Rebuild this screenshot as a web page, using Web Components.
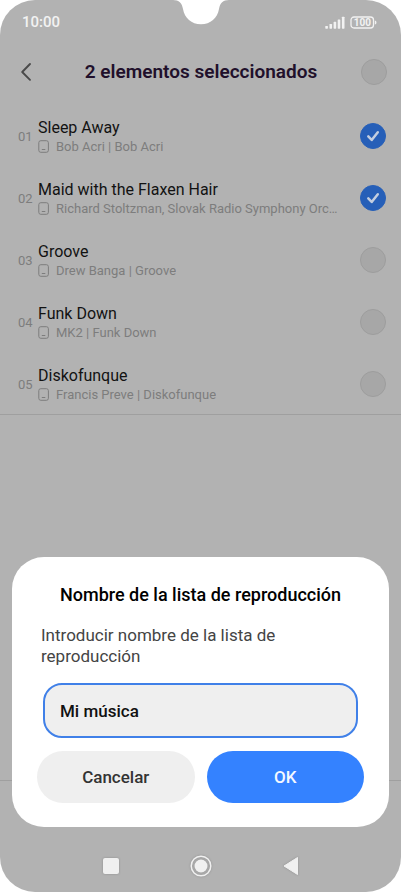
<!DOCTYPE html>
<html lang="es">
<head>
<meta charset="utf-8">
<meta name="viewport" content="width=device-width, initial-scale=1">
<title>Lista de reproducción</title>
<style>
  html { background: #fff; }
  body { margin: 0; font-family: Roboto, "Liberation Sans", sans-serif; color: #121212; }
</style>
</head>
<body>
<phone-screen>
  <status-bar slot="status" time="10:00" battery="100"></status-bar>
  <selection-header slot="header">2 elementos seleccionados</selection-header>
  <track-list>
    <track-row number="01" detail="Bob Acri | Bob Acri" checked>Sleep Away</track-row>
    <track-row number="02" detail="Richard Stoltzman, Slovak Radio Symphony Orc…" checked>Maid with the Flaxen Hair</track-row>
    <track-row number="03" detail="Drew Banga | Groove">Groove</track-row>
    <track-row number="04" detail="MK2 | Funk Down">Funk Down</track-row>
    <track-row number="05" detail="Francis Preve | Diskofunque">Diskofunque</track-row>
  </track-list>
  <navigation-bar slot="navigation"></navigation-bar>
  <name-dialog slot="dialog" value="Mi música">
    <span slot="title">Nombre de la lista de reproducción</span>
    <span slot="prompt">Introducir nombre de la lista de reproducción</span>
  </name-dialog>
</phone-screen>

<script>
class BaseElement extends HTMLElement {
  connectedCallback() {
    if (this.shadowRoot) return;
    const template = document.createElement('template');
    template.innerHTML = this.markup();
    this.attachShadow({ mode: 'open' }).append(template.content.cloneNode(true));
  }
  attr(name) { return this.getAttribute(name) || ''; }
}

customElements.define('phone-screen', class extends BaseElement {
  markup() { return `
    <style>
      :host { display: flex; flex-direction: column; position: relative; min-height: 100vh;
        background: #b2b2b2; border-radius: 35px; overflow: hidden; }
      .notch { position: absolute; top: 0; left: 50%; width: 56px; height: 25px; margin-left: -28px; }
      main { flex: 1; }
      .tools { height: 52px; border-top: 1px solid #9f9f9f; }
      .overlay { position: absolute; left: 12px; right: 12px; bottom: 65px; }
    </style>
    <slot name="status"></slot>
    <slot name="header"></slot>
    <main><slot></slot></main>
    <div class="tools"></div>
    <slot name="navigation"></slot>
    <svg class="notch" viewBox="0 0 56 25" aria-hidden="true"><path fill="#fff" d="M0 0C6 0 9 3 10 9C11.500 18 18.500 24.300 28 24.300C37.500 24.300 44.500 18 46 9C47 3 50 0 56 0Z"/></svg>
    <div class="overlay"><slot name="dialog"></slot></div>`; }
});

customElements.define('status-bar', class extends BaseElement {
  markup() { return `
    <style>
      :host { display: flex; align-items: center; justify-content: space-between; height: 44px;
        padding: 0 24px 0 22px; box-sizing: border-box; color: #f2f2f2; }
      time { font-size: 15px; line-height: 20px; font-weight: 500; }
      div { display: flex; align-items: center; gap: 5px; }
      svg { display: block; }
      text { font: 700 10px Roboto, "Liberation Sans", sans-serif; }
    </style>
    <time>${this.attr('time')}</time>
    <div>
      <svg width="20" height="13" viewBox="0 0 20 13" fill="#f2f2f2" aria-label="Cobertura">
        <rect x="0.300" y="10" width="2.600" height="2.700" rx=".6"/><rect x="4.500" y="8" width="2.600" height="4.700" rx=".6"/>
        <rect x="8.600" y="5.800" width="2.600" height="6.900" rx=".6"/><rect x="12.700" y="3.500" width="2.600" height="9.200" rx=".6"/>
        <rect x="16.900" y="0.700" width="2.600" height="12" rx=".6"/>
      </svg>
      <svg width="27" height="13" viewBox="0 0 27 13" aria-label="Batería">
        <rect x="1" y="1" width="22.500" height="11" rx="3" fill="none" stroke="#f2f2f2" stroke-width="1.300"/>
        <path d="M24.800 4.500C27 5 27 8 24.800 8.500Z" fill="#f2f2f2"/>
        <text x="12.300" y="10" text-anchor="middle" fill="#f2f2f2">${this.attr('battery')}</text>
      </svg>
    </div>`; }
});

customElements.define('round-check', class extends BaseElement {
  markup() { return `
    <style>
      :host { display: grid; width: 26px; height: 26px; flex: none; }
      input, svg { grid-area: 1 / 1; width: 26px; height: 26px; margin: 0; }
      input { appearance: none; box-sizing: border-box; border: 1px solid #9d9d9d; border-radius: 50%; background: #a7a7a7; }
      input:checked { border-color: #265fb8; background: #265fb8; }
      svg { display: none; pointer-events: none; }
      input:checked + svg { display: block; }
    </style>
    <input type="checkbox" aria-label="${this.attr('label')}" ${this.hasAttribute('checked') ? 'checked' : ''}>
    <svg viewBox="0 0 26 26" aria-hidden="true"><path d="M8.300 13.400L11.700 17L17.800 9.200" fill="none" stroke="#c3cee0" stroke-width="2.500" stroke-linecap="round" stroke-linejoin="round"/></svg>`; }
});

customElements.define('selection-header', class extends BaseElement {
  markup() { return `
    <style>
      :host { display: grid; grid-template-columns: 26px 1fr 26px; align-items: center; height: 56px; padding: 0 14px 0 13px; }
      button { display: grid; place-items: center; width: 26px; height: 26px; padding: 0; border: 0; background: none; }
      h1 { margin: 0; padding-left: 2px; text-align: center; font-size: 19px; line-height: 24px; font-weight: 600; color: #21102b; white-space: nowrap; }
    </style>
    <button type="button" aria-label="Atrás"><svg width="12" height="20" viewBox="0 0 12 20" aria-hidden="true"><path d="M10 2L2.200 10L10 17.800" fill="none" stroke="#4a4a4a" stroke-width="1.900" stroke-linecap="round" stroke-linejoin="round"/></svg></button>
    <h1><slot></slot></h1>
    <round-check label="Seleccionar todo"></round-check>`; }
});

customElements.define('track-list', class extends BaseElement {
  markup() { return `
    <style>:host { display: block; padding-top: 5px; box-shadow: inset 0 -1px #9f9f9f; }</style>
    <slot></slot>`; }
});

customElements.define('track-row', class extends BaseElement {
  markup() { return `
    <style>
      :host { display: grid; grid-template-columns: 20px minmax(0, 1fr) 26px; align-items: center;
        height: 62px; padding: 0 15px 0 18px; box-sizing: border-box; }
      .number { padding-top: 1px; font-size: 13px; line-height: 18px; color: #7d7d7d; }
      .text { min-width: 0; padding: 2px 18px 0 0; }
      h2 { margin: 0; font-size: 16px; line-height: 20px; font-weight: 400; }
      p { display: flex; align-items: center; gap: 7px; margin: 0; font-size: 13px; line-height: 18px; color: #7d7d7d; }
      p span { min-width: 0; overflow: hidden; text-overflow: ellipsis; white-space: nowrap; }
      svg { flex: none; }
    </style>
    <span class="number">${this.attr('number')}</span>
    <div class="text">
      <h2><slot></slot></h2>
      <p><svg width="11" height="14" viewBox="0 0 11 14" fill="none" stroke="#7d7d7d" aria-hidden="true"><rect x=".8" y=".7" width="9.600" height="11.600" rx="2"/><path d="M3.800 9.500H7.300"/></svg><span>${this.attr('detail')}</span></p>
    </div>
    <round-check label="${this.textContent}" ${this.hasAttribute('checked') ? 'checked' : ''}></round-check>`; }
});

customElements.define('navigation-bar', class extends BaseElement {
  markup() { return `
    <style>
      :host { display: flex; justify-content: center; gap: 66px; height: 59px; padding-top: 8px; box-sizing: border-box; }
      button { display: grid; place-items: center; width: 24px; height: 50px; padding: 0; border: 0; background: none; }
      svg { filter: drop-shadow(0 0 1px #8e8e8e); }
    </style>
    <button type="button" aria-label="Recientes"><svg width="24" height="24" viewBox="0 0 24 24" fill="#f0f0f0"><rect x="4" y="4" width="16" height="16" rx="2"/></svg></button>
    <button type="button" aria-label="Inicio"><svg width="24" height="24" viewBox="0 0 24 24"><circle cx="12" cy="12" r="9.800" fill="none" stroke="#f0f0f0" stroke-width="1.500"/><circle cx="12" cy="12" r="6.500" fill="#f0f0f0"/></svg></button>
    <button type="button" aria-label="Volver"><svg width="24" height="24" viewBox="0 0 24 24"><path d="M5 12L18.500 3.500V20.500Z" fill="#f0f0f0" stroke="#f0f0f0" stroke-width="1" stroke-linejoin="round"/></svg></button>`; }
});

customElements.define('pill-button', class extends BaseElement {
  markup() { return `
    <style>
      :host { display: block; flex: 1; }
      button { width: 100%; height: 52px; border: 0; border-radius: 26px; font: 500 17px/22px Roboto, "Liberation Sans", sans-serif; background: #efefef; color: #333; }
      :host([primary]) button { background: #3482ff; color: #f4f8ff; }
    </style>
    <button type="button"><slot></slot></button>`; }
});

customElements.define('name-dialog', class extends BaseElement {
  markup() { return `
    <style>
      :host { display: block; box-sizing: border-box; padding: 26px 25px 24px; border-radius: 32px; background: #fff; }
      h2 { margin: 0; text-align: center; font-size: 18px; line-height: 24px; font-weight: 500; color: #000; white-space: nowrap; }
      label { display: block; margin: 18px 4px 16px; padding-right: 24px; font-size: 17px; line-height: 21px; color: #444; }
      .field { padding: 0 6px; }
      input { display: block; width: 100%; height: 55px; box-sizing: border-box; padding: 0 15px; border: 2px solid #4080e8;
        border-radius: 19px; outline: 0; background: #efefef; color: #111; font: 500 17px/22px Roboto, "Liberation Sans", sans-serif; }
      .actions { display: flex; gap: 12px; margin-top: 13px; }
    </style>
    <section role="dialog" aria-labelledby="title">
      <h2 id="title"><slot name="title"></slot></h2>
      <label for="name"><slot name="prompt"></slot></label>
      <div class="field"><input id="name" type="text" value="${this.attr('value')}"></div>
      <div class="actions"><pill-button>Cancelar</pill-button><pill-button primary>OK</pill-button></div>
    </section>`; }
});
</script>
</body>
</html>
